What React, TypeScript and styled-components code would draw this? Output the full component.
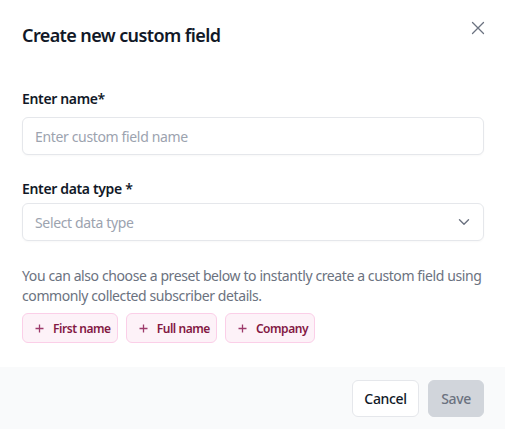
import styled, { createGlobalStyle } from 'styled-components'

const GlobalStyle = createGlobalStyle`
  html, body {
    margin: 0;
    padding: 0;
    background: #ffffff;
  }
  body {
    font-family: 'Noto Sans', 'Segoe UI', sans-serif;
    color: #111827;
  }
`

const Modal = styled.div`
  width: 505px;
  height: 429px;
  display: flex;
  flex-direction: column;
  background: #ffffff;
  overflow: hidden;
`

const Header = styled.div`
  display: flex;
  justify-content: space-between;
  align-items: flex-start;
  padding: 23px 17px 0 22px;
  height: 61px;
  box-sizing: border-box;
`

const Title = styled.h2`
  margin: 0;
  font-size: 18px;
  line-height: 24px;
  font-weight: 600;
  color: #111827;
  letter-spacing: -0.6px;
`

const CloseButton = styled.button`
  border: 0;
  background: transparent;
  padding: 0;
  margin-top: -5px;
  width: 20px;
  height: 20px;
  display: grid;
  place-items: center;
  color: #6b7280;
  cursor: pointer;
`

const Body = styled.div`
  flex: 1;
  padding: 28px 21px 0 22px;
  display: flex;
  flex-direction: column;
`

const Field = styled.div<{ $gap?: number; $labelGap?: number }>`
  display: flex;
  flex-direction: column;
  gap: ${({ $labelGap }) => $labelGap ?? 8}px;
  margin-bottom: ${({ $gap }) => $gap ?? 0}px;
`

const Label = styled.label`
  font-size: 14px;
  line-height: 20px;
  font-weight: 600;
  color: #111827;
  letter-spacing: -0.35px;
`

const Input = styled.input`
  box-sizing: border-box;
  height: 38px;
  width: 100%;
  padding: 0 12px;
  border: 1px solid #e5e7eb;
  border-radius: 6px;
  font-family: inherit;
  font-size: 14px;
  letter-spacing: -0.35px;
  color: #111827;
  outline: none;
  box-shadow: 0 1px 2px rgba(0, 0, 0, 0.03);

  &::placeholder {
    color: #9ca3af;
  }
`

const Select = styled.div`
  box-sizing: border-box;
  height: 38px;
  padding: 0 12px;
  border: 1px solid #e5e7eb;
  border-radius: 6px;
  display: flex;
  align-items: center;
  justify-content: space-between;
  font-size: 14px;
  letter-spacing: -0.35px;
  color: #9ca3af;
  box-shadow: 0 1px 2px rgba(0, 0, 0, 0.03);
`

const Chevron = styled.span`
  display: grid;
  place-items: center;
  color: #6b7280;
  margin-right: 1px;
`

const Hint = styled.p`
  margin: 0 0 7px;
  font-size: 14px;
  line-height: 20px;
  color: #6b7280;
  letter-spacing: -0.4px;
`

const Chips = styled.div`
  display: flex;
  gap: 8px;
`

const Chip = styled.button`
  box-sizing: border-box;
  height: 30px;
  padding: 0 6px 0 12px;
  display: flex;
  align-items: center;
  gap: 9px;
  background: #fdf2f8;
  border: 1px solid #fbcfe8;
  border-radius: 6px;
  font-family: inherit;
  font-size: 12px;
  font-weight: 600;
  letter-spacing: -0.45px;
  color: #831843;
  cursor: pointer;
`

const PlusIcon = styled.span`
  display: grid;
  place-items: center;
  color: #9d3a6b;
`

const Footer = styled.div`
  height: 62px;
  box-sizing: border-box;
  background: #f9fafb;
  display: flex;
  justify-content: flex-end;
  align-items: center;
  gap: 9px;
  padding: 0 21px 0 22px;
`

const Button = styled.button<{ $primary?: boolean }>`
  box-sizing: border-box;
  height: 37px;
  width: ${({ $primary }) => ($primary ? 56 : 67)}px;
  padding: 0;
  border-radius: 6px;
  font-family: inherit;
  font-size: 14px;
  font-weight: 500;
  letter-spacing: -0.35px;
  cursor: pointer;
  border: 1px solid ${({ $primary }) => ($primary ? '#d1d5db' : '#e5e7eb')};
  background: ${({ $primary }) => ($primary ? '#d1d5db' : '#ffffff')};
  color: ${({ $primary }) => ($primary ? '#6b7280' : '#111827')};
`

const presets = ['First name', 'Full name', 'Company']

export default function App() {
  return (
    <>
      <GlobalStyle />
      <Modal>
        <Header>
          <Title>Create new custom field</Title>
          <CloseButton aria-label="Close">
            <svg width="14" height="14" viewBox="0 0 14 14" fill="none">
              <path
                d="M1.5 1.5l11 11M12.5 1.5l-11 11"
                stroke="currentColor"
                strokeWidth="1.3"
                strokeLinecap="round"
              />
            </svg>
          </CloseButton>
        </Header>
        <Body>
          <Field $gap={24}>
            <Label>Enter name*</Label>
            <Input placeholder="Enter custom field name" />
          </Field>
          <Field $gap={25} $labelGap={4}>
            <Label>Enter data type *</Label>
            <Select>
              <span>Select data type</span>
              <Chevron>
                <svg width="12" height="8" viewBox="0 0 12 8" fill="none">
                  <path
                    d="M1.5 1.8l4.5 4.4 4.5-4.4"
                    stroke="currentColor"
                    strokeWidth="1.4"
                    strokeLinecap="round"
                    strokeLinejoin="round"
                  />
                </svg>
              </Chevron>
            </Select>
          </Field>
          <Hint>
            You can also choose a preset below to instantly create a custom field using
            commonly collected subscriber details.
          </Hint>
          <Chips>
            {presets.map((p) => (
              <Chip key={p}>
                <PlusIcon>
                  <svg width="9" height="9" viewBox="0 0 9 9" fill="none">
                    <path d="M4.5 0.5v8M0.5 4.5h8" stroke="currentColor" strokeWidth="1.3" />
                  </svg>
                </PlusIcon>
                {p}
              </Chip>
            ))}
          </Chips>
        </Body>
        <Footer>
          <Button>Cancel</Button>
          <Button $primary>Save</Button>
        </Footer>
      </Modal>
    </>
  )
}
